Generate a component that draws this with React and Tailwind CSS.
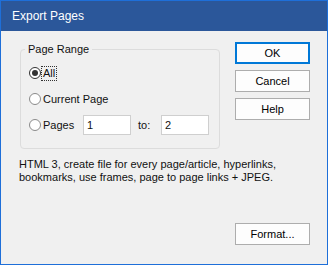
import React from 'react';

const font = { fontFamily: '"Liberation Sans", Arial, sans-serif' };

const Radio = ({ checked, label, focused, className = '' }) => (
  <div className={`flex items-center h-[20px] ${className}`}>
    <span
      className={`w-[12px] h-[12px] rounded-full border bg-white flex items-center justify-center ${checked ? 'border-[#333333]' : 'border-[#8a8a8a]'}`}
    >
      {checked && <span className="w-[6px] h-[6px] rounded-full bg-[#333333]" />}
    </span>
    <span
      className={`px-[1px] leading-[13px] border border-dotted ${focused ? 'border-[#333333]' : 'border-transparent'}`}
    >
      {label}
    </span>
  </div>
);

const Button = ({ children, primary }) => (
  <button
    className={`w-[75px] h-[22px] bg-[#fdfdfd] text-[11px] text-black flex items-center justify-center ${primary ? 'border-2 border-[#0078d7]' : 'border border-[#adadad]'}`}
  >
    {children}
  </button>
);

const App = () => {
  return (
    <div
      className="w-[328px] h-[265px] flex flex-col bg-[#f0f0f0] border border-[#1e6fd9] text-[11px] text-[#111111]"
      style={font}
    >
      <div className="h-[30px] bg-[#2b579a] flex items-center pl-[11px] text-white text-[12px]">
        Export Pages
      </div>

      <div className="flex-1 flex flex-col pl-[19px] pr-[17px]">
        <div className="flex items-start pt-[11px] gap-[15px]">
          <fieldset className="w-[200px] h-[107px] border border-[#dcdcdc] rounded-[4px] pl-[8px] pt-[7px] flex flex-col gap-[6px]">
            <legend className="-ml-[4px] px-[3px] leading-[14px]">Page Range</legend>
            <Radio checked focused label="All" />
            <Radio label="Current Page" />
            <div className="flex items-center h-[20px]">
              <Radio label="Pages" className="w-[54px]" />
              <input
                readOnly
                value="1"
                className="w-[48px] h-[20px] bg-white border border-[#cfcfcf] pl-[3px] text-[11px] outline-none"
              />
              <span className="w-[30px] pl-[7px]">to:</span>
              <input
                readOnly
                value="2"
                className="w-[48px] h-[20px] bg-white border border-[#cfcfcf] pl-[3px] text-[11px] outline-none"
              />
            </div>
          </fieldset>

          <div className="flex flex-col gap-[6px]">
            <Button primary>OK</Button>
            <Button>Cancel</Button>
            <Button>Help</Button>
          </div>
        </div>

        <p className="mt-[9px] -ml-[1px] leading-[13px] whitespace-nowrap">
          HTML 3, create file for every page/article, hyperlinks,
          <br />
          bookmarks, use frames, page to page links + JPEG.
        </p>

        <div className="mt-auto mb-[19px] flex justify-end">
          <Button>Format...</Button>
        </div>
      </div>
    </div>
  );
};

export default App;
